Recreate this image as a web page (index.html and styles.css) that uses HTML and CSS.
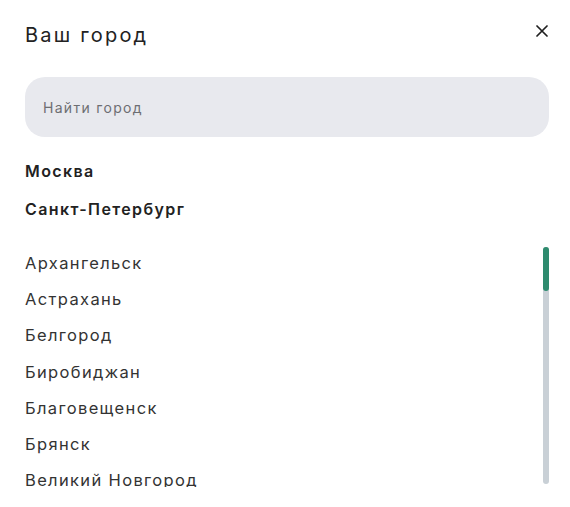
FILE: index.html
```html
<!DOCTYPE html>
<html lang="ru">
<head>
<meta charset="utf-8">
<link rel="stylesheet" href="styles.css">
</head>
<body>
<div class="modal">
  <div class="header">
    <h2 class="title">Ваш город</h2>
    <button class="close" aria-label="Закрыть">
      <svg width="12" height="12" viewBox="0 0 12 12"><path d="M1 1L11 11M11 1L1 11" stroke="#1f1f1f" stroke-width="1.7" stroke-linecap="round"/></svg>
    </button>
  </div>
  <div class="search">
    <input class="search-input" type="text" placeholder="Найти город">
  </div>
  <ul class="popular">
    <li>Москва</li>
    <li>Санкт-Петербург</li>
  </ul>
  <div class="list-wrap">
    <ul class="cities">
      <li>Архангельск</li>
      <li>Астрахань</li>
      <li>Белгород</li>
      <li>Биробиджан</li>
      <li>Благовещенск</li>
      <li>Брянск</li>
      <li>Великий Новгород</li>
      <li>Владивосток</li>
      <li>Владикавказ</li>
      <li>Владимир</li>
      <li>Волгоград</li>
      <li>Вологда</li>
      <li>Воронеж</li>
      <li>Екатеринбург</li>
      <li>Иваново</li>
      <li>Ижевск</li>
      <li>Иркутск</li>
      <li>Казань</li>
      <li>Калининград</li>
      <li>Калуга</li>
      <li>Кемерово</li>
      <li>Киров</li>
      <li>Кострома</li>
      <li>Краснодар</li>
      <li>Красноярск</li>
      <li>Курган</li>
      <li>Курск</li>
      <li>Липецк</li>
      <li>Магадан</li>
      <li>Махачкала</li>
      <li>Мурманск</li>
      <li>Нижний Новгород</li>
      <li>Новосибирск</li>
      <li>Омск</li>
      <li>Орёл</li>
      <li>Оренбург</li>
    </ul>
    <div class="scrollbar"><div class="thumb"></div></div>
  </div>
</div>
</body>
</html>
```
FILE: styles.css
```css
* { box-sizing: border-box; }
html, body { margin: 0; padding: 0; background: #fff; }
body { font-family: Inter, "Noto Sans", sans-serif; color: #2b2b2b; }
.modal { padding: 0 21px 0 25px; }
.header {
  height: 70px;
  display: flex;
  align-items: center;
  justify-content: space-between;
}
.title { margin: 0; font-size: 20px; font-weight: 400; color: #222; letter-spacing: 2.2px; }
.close {
  border: 0; background: none; padding: 0; width: 14px; height: 14px;
  margin-bottom: 8px;
  display: flex; align-items: center; justify-content: center; cursor: pointer;
}
.search { margin-top: 7px; }
.search-input {
  width: 100%;
  height: 60px;
  border: 0;
  border-radius: 20px;
  background: #e8e9ee;
  padding: 0 18px;
  font-family: inherit;
  font-size: 14px;
  letter-spacing: 1.3px;
  color: #333;
  outline: none;
}
.search-input::placeholder { color: #6d6e72; }
ul { list-style: none; margin: 0; padding: 0; }
.popular { margin-top: 15px; }
.popular li {
  height: 38px; line-height: 38px;
  font-size: 16px; font-weight: 600; color: #222; letter-spacing: 1.4px;
}
.list-wrap { position: relative; margin-top: 17px; }
.cities {
  height: 242px;
  overflow: hidden;
}
.cities li {
  height: 36.2px; line-height: 36.2px;
  font-size: 16.5px; color: #333; letter-spacing: 1.35px;
}
.scrollbar {
  position: absolute;
  right: 0;
  top: 2px;
  width: 6px;
  height: 237px;
  border-radius: 3px;
  background: #c9d0d6;
}
.thumb {
  height: 44px;
  border-radius: 3px;
  background: #2e8b6e;
}
```
